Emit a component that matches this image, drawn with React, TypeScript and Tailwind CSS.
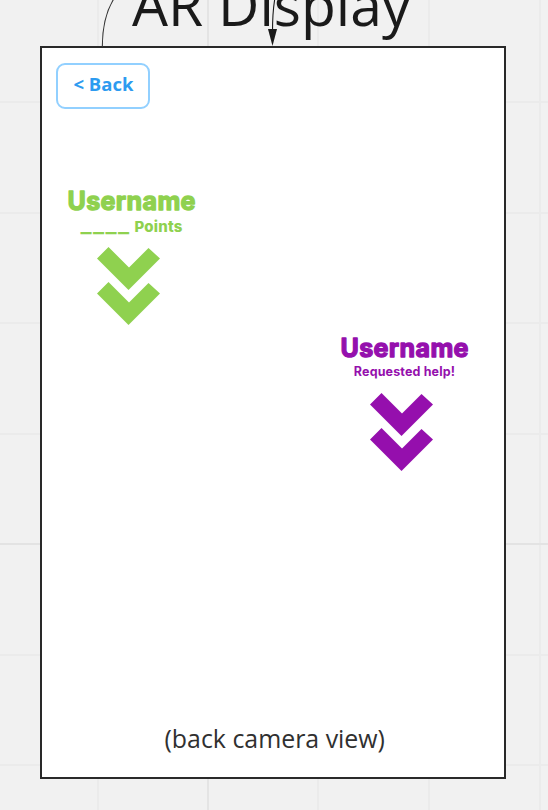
import React from "react";

const verticalLines = [98, 208, 318, 429, 540];
const horizontalLines = [101, 212, 322, 433, 543, 654, 764];

function CanvasGrid() {
  return (
    <svg className="absolute inset-0" width="548" height="810" shapeRendering="crispEdges">
      {verticalLines.map((x) => (
        <rect key={x} x={x - 1} y="0" width="2" height="810" fill={x === 208 ? "#e4e4e4" : "#ebebeb"} />
      ))}
      {horizontalLines.map((y) => (
        <rect key={y} x="0" y={y} width="548" height="2" fill={y === 543 ? "#e3e3e3" : "#ebebeb"} />
      ))}
    </svg>
  );
}

function Connectors() {
  return (
    <svg className="absolute left-0 top-0" width="548" height="48" fill="none">
      <path d="M102.3 47C102.3 29 105 12 115 -3" stroke="#333" strokeWidth="1.1" />
      <path d="M274.6 0C273 10 272.5 20 272.5 32" stroke="#1a1a1a" strokeWidth="1.1" />
      <path d="M268 29L277 29L272.5 46Z" fill="#1a1a1a" />
    </svg>
  );
}

function Chevrons() {
  return (
    <svg width="64" height="80" viewBox="0 0 64 80" fill="currentColor">
      <path d="M1 12.5L12.5 1L33 21.5L52.5 2L64 12.5L32.5 44Z" />
      <path d="M1 47.5L12.5 36L33 56.5L52.5 37L64 47.5L32.5 79Z" />
    </svg>
  );
}

function Name() {
  return (
    <svg className="h-[32px] w-[130px] overflow-visible" fill="currentColor" stroke="currentColor" strokeWidth="1.3" strokeLinejoin="round">
      <text x="1.5" y="24.6" textLength="128" lengthAdjust="spacing" className="text-[25px] font-bold">
        Username
      </text>
    </svg>
  );
}

export default function App() {
  return (
    <main className="relative h-[810px] w-[548px] overflow-hidden bg-[#f1f1f1] font-['Open_Sans',sans-serif]">
      <CanvasGrid />
      <div className="relative flex h-[46px] items-end pb-[3px] pl-[132px]">
        <h1 className="whitespace-nowrap text-[57px] font-normal leading-[78px] text-[#1a1a1a]">AR Display</h1>
      </div>
      <section className="relative ml-[40px] flex h-[733px] w-[465.5px] flex-col border-2 border-[#292929] bg-white">
        <button className="ml-[14.4px] mt-[15px] flex h-[46px] w-[94px] shrink-0 items-center justify-center rounded-[9px] border-2 border-[#92d0ff] pb-[5px] text-[18.5px] font-bold text-[#2d9bf0]">
          &lt; Back
        </button>
        <div className="ml-[14px] mt-[76px] flex w-[150px] flex-col items-center font-['Inter',sans-serif] text-[#8fd14f]">
          <Name />
          <div className="flex h-[20px] items-end whitespace-nowrap pl-px text-[15px] font-extrabold leading-5 tracking-[0.2px]">
            <span className="mb-[3px] mr-[4px] text-[24px] font-medium tracking-[1.4px]">____</span>
            <span>Points</span>
          </div>
          <div className="ml-[-6px] mt-[9px]"><Chevrons /></div>
        </div>
        <div className="ml-[287px] mt-[6px] flex w-[150px] flex-col items-center font-['Inter',sans-serif] text-[#950fad]">
          <Name />
          <div className="whitespace-nowrap pl-px text-[12.5px] font-bold leading-4 tracking-[0.15px]">Requested help!</div>
          <div className="ml-[-6px] mt-[12px]"><Chevrons /></div>
        </div>
        <p className="mb-[21.4px] ml-[4px] mt-auto text-center text-[24.9px] leading-[36px] text-[#303030]">(back camera view)</p>
      </section>
      <Connectors />
    </main>
  );
}
